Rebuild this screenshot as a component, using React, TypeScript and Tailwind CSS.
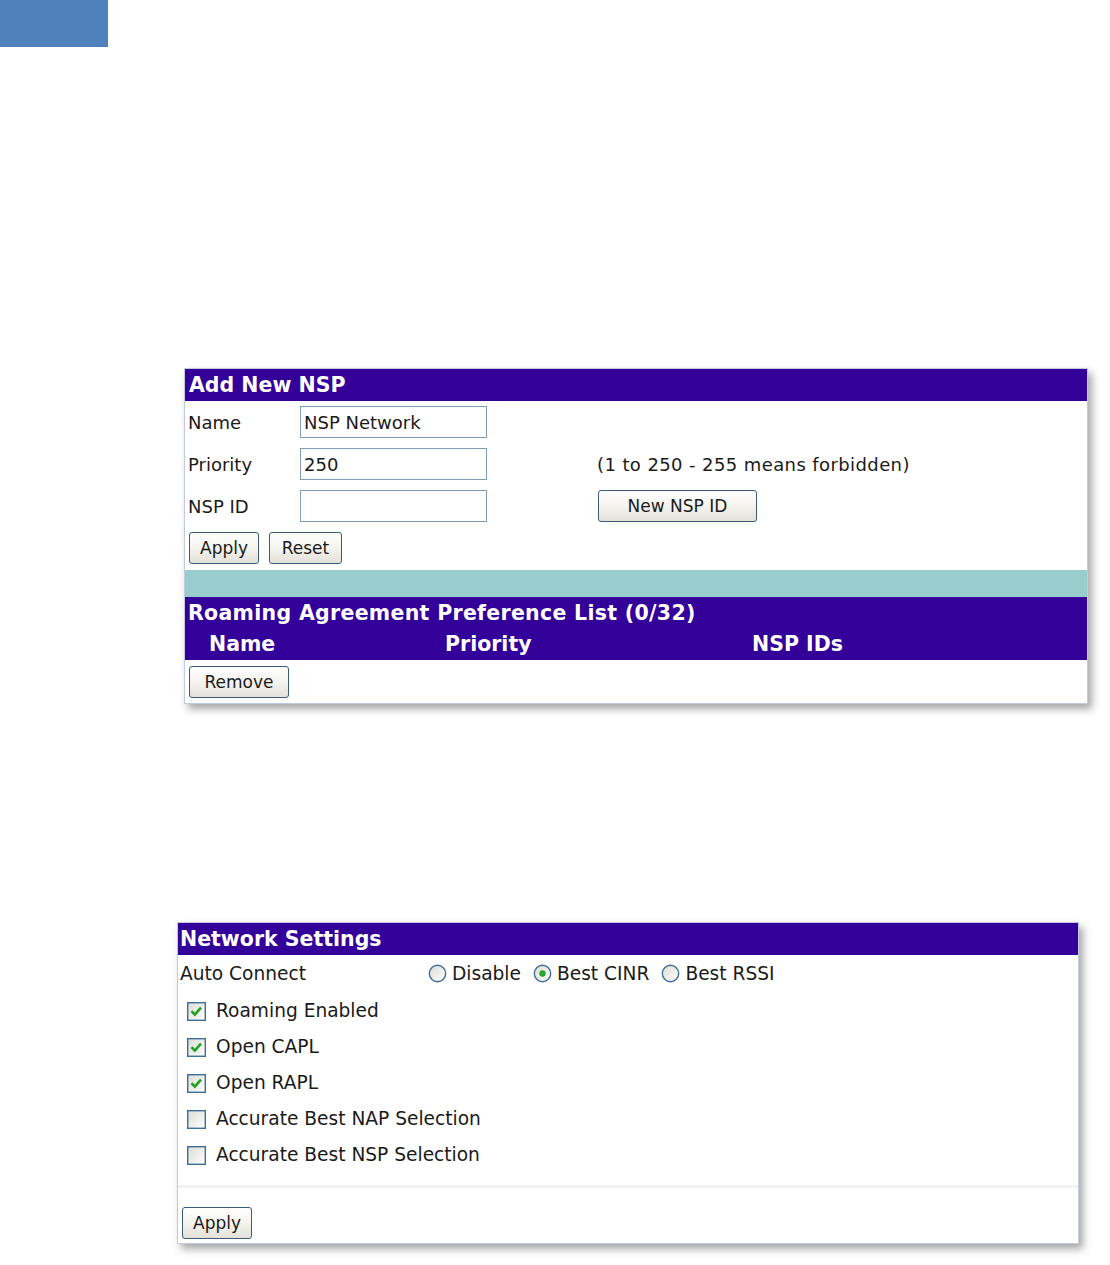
import React, { useState } from 'react';

const body = { fontFamily: '"DejaVu Sans", Verdana, sans-serif' };

const XpButton: React.FC<{ label: string; className?: string }> = ({ label, className }) => (
  <button
    type="button"
    className={`h-[32px] rounded-[3px] border border-[#3c5b7a] bg-gradient-to-b from-white via-[#f4f3ee] to-[#e3e1d8] text-[17px] leading-none text-[#1a1a1a] ${className ?? ''}`}
    style={body}
  >
    {label}
  </button>
);

const Radio: React.FC<{ checked?: boolean }> = ({ checked }) => (
  <svg width="19" height="19" viewBox="0 0 19 19" className="shrink-0">
    <defs>
      <linearGradient id="rg" x1="0" y1="0" x2="1" y2="1">
        <stop offset="0" stopColor="#dcdcd4" />
        <stop offset="1" stopColor="#ffffff" />
      </linearGradient>
    </defs>
    <circle cx="9.5" cy="9.5" r="8.2" fill="url(#rg)" stroke="#3e6e9c" strokeWidth="1.4" />
    {checked && <circle cx="9.5" cy="9.5" r="3.2" fill="#2aa52a" />}
  </svg>
);

const Check: React.FC<{ checked?: boolean }> = ({ checked }) => (
  <svg width="19" height="19" viewBox="0 0 19 19" className="shrink-0">
    <defs>
      <linearGradient id="cg" x1="0" y1="0" x2="1" y2="1">
        <stop offset="0" stopColor="#dcdcd4" />
        <stop offset="1" stopColor="#ffffff" />
      </linearGradient>
    </defs>
    <rect x="0.7" y="0.7" width="17.6" height="17.6" fill="url(#cg)" stroke="#3e6e9c" strokeWidth="1.4" />
    {checked && <path d="M4.5 9.2 L7.8 12.6 L14 5.6" fill="none" stroke="#21a121" strokeWidth="2.6" />}
  </svg>
);

const AddNspPanel: React.FC = () => {
  const [name, setName] = useState('NSP Network');
  const [priority, setPriority] = useState('250');
  const [nspId, setNspId] = useState('');

  const inputCls =
    'h-[32px] w-[187px] border border-[#7f9db9] bg-white px-[3px] text-[18px] text-[#1a1a1a] outline-none';

  return (
    <div className="ml-[184px] mt-[321px] w-[904px] border border-[#c4cadb] bg-white shadow-[4px_5px_8px_rgba(0,0,0,0.35)]">
      <div className="flex h-[32px] items-center bg-[#330099] pl-[4px] text-[20.5px] font-bold text-white" style={body}>
        Add New NSP
      </div>

      <div className="flex flex-col gap-[10px] pt-[5px] text-[18px] text-[#1a1a1a]" style={body}>
        <div className="flex items-center">
          <span className="w-[115px] pl-[3px]">Name</span>
          <input className={inputCls} style={body} value={name} onChange={e => setName(e.target.value)} />
        </div>
        <div className="flex items-center">
          <span className="w-[115px] pl-[3px]">Priority</span>
          <input className={inputCls} style={body} value={priority} onChange={e => setPriority(e.target.value)} />
          <span className="ml-[110px] tracking-[0.4px]">(1 to 250 - 255 means forbidden)</span>
        </div>
        <div className="flex items-center">
          <span className="w-[115px] pl-[3px]">NSP ID</span>
          <input className={inputCls} style={body} value={nspId} onChange={e => setNspId(e.target.value)} />
          <XpButton label="New NSP ID" className="ml-[111px] w-[159px]" />
        </div>
      </div>

      <div className="flex gap-[10px] pl-[4px] pt-[10px]">
        <XpButton label="Apply" className="w-[70px]" />
        <XpButton label="Reset" className="w-[73px]" />
      </div>

      <div className="mt-[6px] h-[27px] bg-[#99cccc]" />

      <div className="bg-[#330099] text-[20.5px] font-bold text-white" style={body}>
        <div className="flex h-[32px] items-center pl-[3px] tracking-[0.3px]">Roaming Agreement Preference List (0/32)</div>
        <div className="flex h-[31px] items-center">
          <span className="w-[260px] pl-[24px]">Name</span>
          <span className="w-[307px]">Priority</span>
          <span>NSP IDs</span>
        </div>
      </div>

      <div className="pb-[5px] pl-[4px] pt-[6px]">
        <XpButton label="Remove" className="w-[100px]" />
      </div>
    </div>
  );
};

const NetworkSettingsPanel: React.FC = () => {
  const checks = [
    { label: 'Roaming Enabled', on: true },
    { label: 'Open CAPL', on: true },
    { label: 'Open RAPL', on: true },
    { label: 'Accurate Best NAP Selection', on: false },
    { label: 'Accurate Best NSP Selection', on: false },
  ];

  return (
    <div className="ml-[177px] mt-[218px] w-[902px] border border-[#c4cadb] bg-white shadow-[4px_5px_8px_rgba(0,0,0,0.35)]">
      <div className="flex h-[32px] items-center bg-[#330099] pl-[2px] text-[20.5px] font-bold text-white" style={body}>
        Network Settings
      </div>

      <div className="text-[18.6px] text-[#1a1a1a]" style={body}>
        <div className="flex h-[38px] items-center">
          <span className="w-[250px] pl-[2px]">Auto Connect</span>
          <div className="flex items-center gap-[5px]">
            <Radio />
            <span>Disable</span>
          </div>
          <div className="ml-[12px] flex items-center gap-[5px]">
            <Radio checked />
            <span>Best CINR</span>
          </div>
          <div className="ml-[12px] flex items-center gap-[5px]">
            <Radio />
            <span>Best RSSI</span>
          </div>
        </div>

        {checks.map(c => (
          <div key={c.label} className="flex h-[36px] items-center gap-[10px] pl-[9px]">
            <Check checked={c.on} />
            <span>{c.label}</span>
          </div>
        ))}

        <div className="mt-[12px] h-[3px] bg-[#f1f1f1]" />

        <div className="pb-[4px] pl-[4px] pt-[19px]">
          <XpButton label="Apply" className="w-[70px]" />
        </div>
      </div>
    </div>
  );
};

export default function App() {
  return (
    <div className="min-h-[1265px] w-[1110px] bg-white">
      <div className="h-[47px] w-[108px] bg-[#4f81bd]" />
      <AddNspPanel />
      <NetworkSettingsPanel />
    </div>
  );
}
